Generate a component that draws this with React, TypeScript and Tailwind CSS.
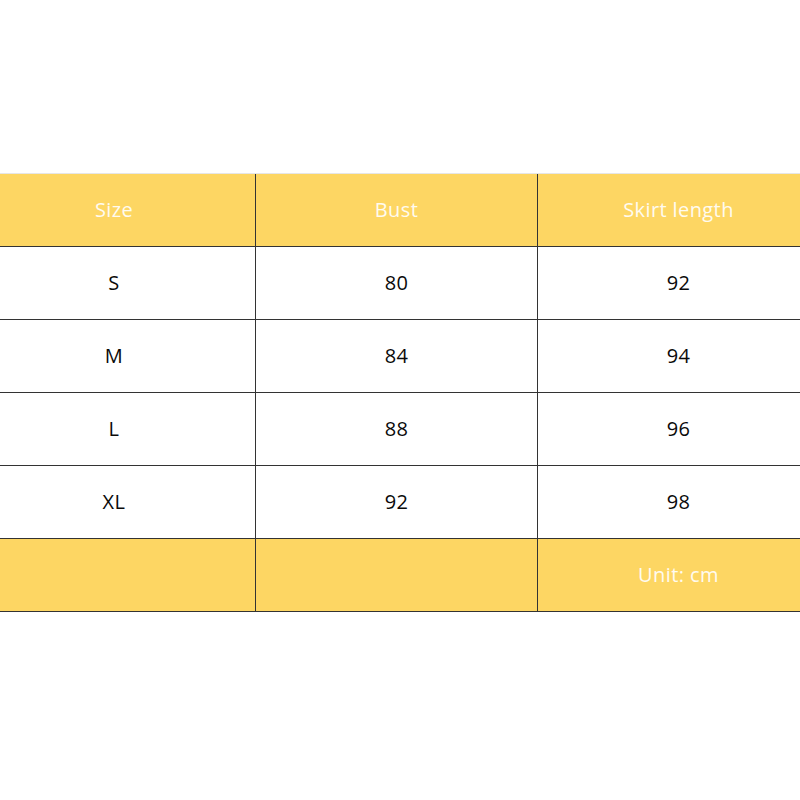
const rows = [
  ['S', '80', '92'],
  ['M', '84', '94'],
  ['L', '88', '96'],
  ['XL', '92', '98'],
];

function Cell({ children, last }: { children?: React.ReactNode; last?: boolean }) {
  return (
    <div
      className={
        'flex h-full items-center justify-center ' +
        (last ? '' : 'border-r border-[#333]')
      }
    >
      {children}
    </div>
  );
}

export default function App() {
  return (
    <div
      className="h-[800px] w-[800px] overflow-hidden bg-white pt-[173px]"
      style={{ fontFamily: '"Open Sans", "Noto Sans", sans-serif' }}
    >
      <div className="ml-[-27px] w-[846px] border-t border-[#e6e6e6] text-[20px] tracking-[0.4px]">
        <div className="grid h-[73px] grid-cols-[283px_282px_281px] border-b border-[#333] bg-[#fdd663] text-[#fffbf0]">
          <Cell>Size</Cell>
          <Cell>Bust</Cell>
          <Cell last>Skirt length</Cell>
        </div>
        {rows.map((r) => (
          <div
            key={r[0]}
            className="grid h-[73px] grid-cols-[283px_282px_281px] border-b border-[#333] text-[#0a0a0a]"
          >
            <Cell>{r[0]}</Cell>
            <Cell>{r[1]}</Cell>
            <Cell last>{r[2]}</Cell>
          </div>
        ))}
        <div className="grid h-[73px] grid-cols-[283px_282px_281px] border-b border-[#333] bg-[#fdd663] text-[#fffbf0]">
          <Cell />
          <Cell />
          <Cell last>Unit: cm</Cell>
        </div>
      </div>
    </div>
  );
}
